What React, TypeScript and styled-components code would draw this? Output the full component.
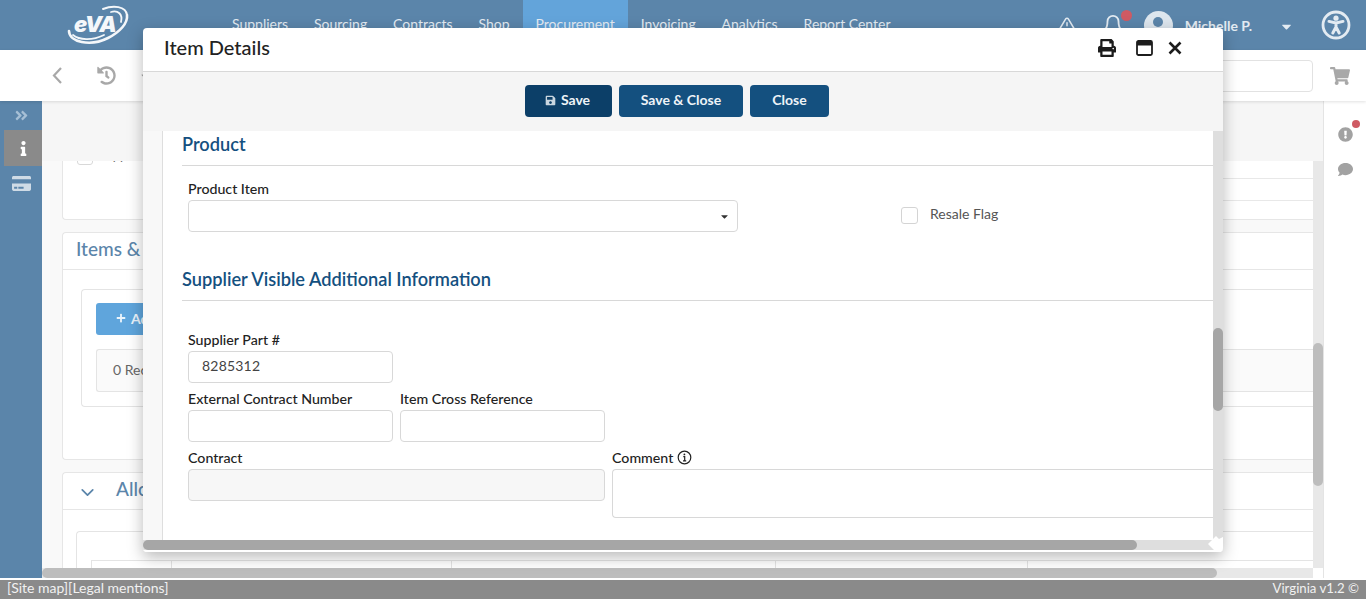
import * as React from 'react';
import styled, { createGlobalStyle } from 'styled-components';
import { FaPrint, FaHistory, FaShoppingCart, FaSave, FaInfo, FaCreditCard, FaAngleDoubleRight, FaCaretDown, FaExclamationCircle, FaComment, FaPlus } from 'react-icons/fa';
import { FiAlertTriangle, FiBell, FiChevronDown } from 'react-icons/fi';

const colors = {
  header: '#5b85aa',
  active: '#63a4da',
  navy: '#14507f',
  navyDark: '#0c3f68',
  line: '#d8d8d8',
  scrollTrack: '#dedede',
  scrollThumb: '#a6a6a6',
  pageThumb: '#bdbdbd',
  footer: '#8a8a8a',
};

const GlobalStyle = createGlobalStyle`
  html, body, #root {
    margin: 0;
    height: 100%;
  }
  body {
    font-family: Lato, "Open Sans", sans-serif;
    overflow: hidden;
  }
  * {
    box-sizing: border-box;
  }
`;

const Page = styled.div`
  position: relative;
  width: 1366px;
  height: 599px;
  display: flex;
  flex-direction: column;
  background: white;
  overflow: hidden;
`;

const Header = styled.header`
  height: 50px;
  flex: none;
  display: flex;
  background: ${colors.header};
  color: #e3ebf2;
`;

const LogoWrap = styled.div`
  width: 219px;
  padding: 4px 0 0 66px;
`;

const Nav = styled.nav`
  display: flex;
  height: 50px;
`;

const NavItem = styled.a<{ $active?: boolean }>`
  padding: 15px 12.95px 0;
  font-size: 14px;
  line-height: 18px;
  background: ${(p) => (p.$active ? colors.active : 'transparent')};
`;

const HeaderRight = styled.div`
  margin-left: auto;
  display: flex;
  align-items: center;
  padding-right: 15px;
`;

const Bell = styled.div`
  position: relative;
  display: flex;
  margin-left: 26px;
  font-size: 22px;

  &::after {
    content: '';
    position: absolute;
    top: -4px;
    right: -8px;
    width: 11px;
    height: 11px;
    border-radius: 50%;
    background: #cf5a63;
  }
`;

const Avatar = styled.div`
  width: 29px;
  height: 29px;
  margin-left: 20px;
  border-radius: 50%;
  background: #dde6ee;
  display: flex;
  justify-content: center;
  padding-top: 6px;

  &::before {
    content: '';
    width: 10px;
    height: 10px;
    border-radius: 50%;
    background: ${colors.header};
  }
`;

const UserName = styled.span`
  margin-left: 12px;
  font-size: 14px;
  font-weight: 700;
`;

const UserCaret = styled.span`
  display: flex;
  margin: 2px 0 0 27px;
  font-size: 15px;
`;

const Toolbar = styled.div`
  height: 51px;
  flex: none;
  display: flex;
  align-items: center;
  padding: 0 16px 0 52px;
  color: #a8a8a8;
  background: white;
  box-shadow: 0 1px 3px rgba(0, 0, 0, 0.12);
  z-index: 1;
`;

const ToolIcon = styled.span<{ $gap?: number; $size?: number }>`
  display: flex;
  margin-left: ${(p) => p.$gap ?? 0}px;
  font-size: ${(p) => p.$size ?? 18}px;
`;

const Search = styled.div`
  width: 320px;
  height: 32px;
  margin-left: auto;
  margin-right: 17px;
  border: 1px solid #e2e2e2;
  border-radius: 4px;
`;

const Body = styled.div`
  flex: 1;
  min-height: 0;
  display: flex;
`;

const Sidebar = styled.aside`
  width: 42px;
  flex: none;
  background: ${colors.header};
  color: #cfdbe6;
  display: flex;
  flex-direction: column;
`;

const SideItem = styled.div<{ $active?: boolean; $h: number; $tone?: string }>`
  height: ${(p) => p.$h}px;
  display: flex;
  align-items: center;
  justify-content: center;
  font-size: 15px;
  ${(p) => p.$tone && `color: ${p.$tone};`}
  ${(p) => p.$active && `
    margin-left: 4px;
    background: #8a8a8a;
    color: white;
  `}
`;

const SideCard = styled(SideItem)`
  font-size: 19px;
  padding-bottom: 2px;
`;

const Main = styled.main`
  flex: 1;
  min-width: 0;
  display: flex;
  flex-direction: column;
`;

const PageTitle = styled.div`
  height: 60px;
  flex: none;
  background: #f6f6f6;
`;

const ScrollPane = styled.div`
  flex: 1;
  min-height: 0;
  display: grid;
  grid-template-columns: 1fr 10px;
  grid-template-rows: 1fr 10px;
`;

const Viewport = styled.div`
  overflow: hidden;
  background: #f9f9f9;
  min-height: 0;
`;

const Card = styled.section<{ $h: number }>`
  height: ${(p) => p.$h}px;
  margin: 0 0 12px 20px;
  background: white;
  border: 1px solid #e6e6e6;
  border-right: 0;
  border-radius: 4px 0 0 4px;
  overflow: hidden;
`;

const ScrolledCard = styled(Card)`
  border-top: 0;
  border-radius: 0 0 0 4px;
`;

const TopRows = styled.div`
  margin-top: -13px;
  padding-left: 14px;
  color: #666;
  font-size: 13px;
  line-height: 14px;
`;

const TopRow = styled.div`
  display: flex;
  align-items: flex-start;
  height: 31px;
`;

const RowRule = styled.div`
  flex: 1;
  height: 100%;
  margin-left: 200px;
  border-bottom: 1px solid #e8e8e8;
`;

const SpacerRule = styled(RowRule)`
  height: 22px;
  margin-left: 300px;
`;

const SmallBox = styled.span`
  width: 16px;
  height: 16px;
  margin: 1px 11px 0 0;
  border: 1px solid #d8d8d8;
  border-radius: 3px;
`;

const CardHead = styled.div`
  height: 37px;
  display: flex;
  align-items: center;
  padding: 0 0 6px 13px;
  border-bottom: 1px solid #e6e6e6;
  color: #5b85aa;
  font-size: 19px;
  font-weight: 500;
`;

const ChevronBox = styled.span`
  display: flex;
  margin: 9px 18px 0 1px;
  font-size: 21px;
`;

const InnerBox = styled.div<{ $left: number; $top: number }>`
  margin: ${(p) => p.$top}px 0 0 ${(p) => p.$left}px;
  padding: 13px 0 0 14px;
  border: 1px solid #e4e4e4;
  border-right: 0;
  border-radius: 4px 0 0 4px;
`;

const AddButton = styled.div`
  width: 200px;
  height: 32px;
  display: flex;
  align-items: center;
  gap: 5px;
  padding: 0 0 2px 20px;
  background: #5fa5dc;
  border-radius: 3px;
  color: #e9f3fb;
  font-size: 14px;
  font-weight: 700;
`;

const RecordBox = styled.div`
  height: 43px;
  margin: 14px 0;
  padding: 11px 0 0 16px;
  background: #fafafa;
  border: 1px solid #e4e4e4;
  border-right: 0;
  border-radius: 3px 0 0 3px;
  color: #666;
  font-size: 14px;
`;

const TableHead = styled.div`
  display: grid;
  grid-template-columns: 80px 280px 324px 252px 1fr;
  height: 30px;
  margin-top: 15px;
  border-top: 1px solid #e4e4e4;
`;

const TableCell = styled.div`
  border-left: 1px solid #e4e4e4;
`;

const RightRail = styled.aside`
  width: 43px;
  flex: none;
  display: flex;
  flex-direction: column;
  align-items: center;
  padding-top: 26px;
  gap: 20px;
  background: white;
  border-left: 1px solid #e4e4e4;
  color: #a2a2a2;
`;

const AlertIcon = styled.div`
  position: relative;
  display: flex;
  font-size: 15px;

  &::after {
    content: '';
    position: absolute;
    top: -7px;
    right: -7px;
    width: 8px;
    height: 8px;
    border-radius: 50%;
    background: #cf5a63;
  }
`;

const ChatIcon = styled.div`
  display: flex;
  font-size: 15px;
`;

const Track = styled.div<{ $tone?: string }>`
  background: ${(p) => p.$tone ?? '#e8e8e8'};
  display: flex;
  min-width: 0;
  min-height: 0;
`;

const VTrack = styled(Track)`
  flex-direction: column;
`;

const Thumb = styled.div<{ $tone: string; $before?: number; $size: number; $vertical?: boolean }>`
  background: ${(p) => p.$tone};
  border-radius: 5px;
  flex: none;
  ${(p) => p.$vertical
    ? `height: ${p.$size}px; width: 100%; margin-top: ${p.$before ?? 0}px;`
    : `width: ${p.$size}px; height: 100%; margin-left: ${p.$before ?? 0}px;`}
`;

const Footer = styled.footer`
  height: 19px;
  flex: none;
  margin-top: 2px;
  display: flex;
  justify-content: space-between;
  align-items: center;
  padding: 0 7px 4px;
  background: ${colors.footer};
  color: #f1f1f1;
  font-size: 14px;
`;

const Version = styled.span`
  font-size: 13.2px;
`;

const Modal = styled.div`
  position: absolute;
  top: 28px;
  left: 143px;
  width: 1080px;
  height: 524px;
  display: flex;
  flex-direction: column;
  background: white;
  border-radius: 4px;
  box-shadow: 0 5px 16px rgba(0, 0, 0, 0.28);
  z-index: 5;
  overflow: hidden;
`;

const ModalHeader = styled.div`
  height: 44px;
  flex: none;
  display: flex;
  align-items: center;
  padding: 0 41px 6px 21px;
  border-bottom: 1px solid ${colors.line};
`;

const ModalTitle = styled.h1`
  margin: 0;
  font-size: 20px;
  font-weight: 500;
  color: #222;
`;

const WindowIcons = styled.div`
  margin: 3px 0 0 auto;
  display: flex;
  align-items: center;
  color: #1c1c1c;
`;

const WindowIcon = styled.span<{ $gap?: number; $size?: number }>`
  display: flex;
  margin-left: ${(p) => p.$gap ?? 0}px;
  font-size: ${(p) => p.$size ?? 16}px;
`;

const ActionBar = styled.div`
  height: 59px;
  flex: none;
  display: flex;
  gap: 7px;
  padding: 13px 0 0 382px;
  background: #f5f5f5;
`;

const ActionButton = styled.button<{ $dark?: boolean; $w: number }>`
  width: ${(p) => p.$w}px;
  height: 32px;
  display: flex;
  align-items: center;
  justify-content: center;
  gap: 5px;
  padding: 0 ${(p) => (p.$dark ? 2 : 0)}px 4px 0;
  border: 0;
  border-radius: 4px;
  background: ${(p) => (p.$dark ? colors.navyDark : colors.navy)};
  color: #eef3f7;
  font-family: inherit;
  font-size: 14px;
  font-weight: 700;
`;

const ButtonGlyph = styled.span`
  display: flex;
  margin-top: 2px;
  font-size: 11px;
  color: #c9d6e0;
`;

const ModalBody = styled.div`
  flex: 1;
  min-height: 0;
  display: grid;
  grid-template-columns: 1fr 10px;
  grid-template-rows: 1fr 10px 2px;
`;

const ScrollArea = styled.div`
  overflow: hidden;
  padding-left: 19px;
  background: #f8f8f8;
`;

const FormCard = styled.div`
  height: 100%;
  padding-left: 19px;
  background: white;
  border-left: 1px solid #dedede;
`;

const SectionTitle = styled.h2`
  height: 35px;
  margin: 0;
  padding-top: 1px;
  font-size: 18.2px;
  line-height: 24px;
  font-weight: 600;
  color: ${colors.navy};
  border-bottom: 1px solid ${colors.line};
`;

const SupplierTitle = styled(SectionTitle)`
  height: 34px;
  margin-top: 35px;
  padding-top: 0;
`;

const ProductRow = styled.div`
  display: flex;
  align-items: flex-end;
  padding: 7px 0 0 6px;
`;

const Field = styled.div<{ $column?: string }>`
  min-width: 0;
  ${(p) => p.$column && `grid-column: ${p.$column};`}
`;

const ProductField = styled(Field)`
  width: 550px;
`;

const Label = styled.label`
  height: 27px;
  display: flex;
  align-items: center;
  gap: 4px;
  padding-top: 3px;
  font-size: 14.2px;
  font-weight: 500;
  color: #222;
`;

const Input = styled.div<{ $disabled?: boolean; $h?: number; $open?: boolean }>`
  height: ${(p) => p.$h ?? 32}px;
  display: flex;
  align-items: center;
  justify-content: space-between;
  padding: 0 7px 4px 13px;
  background: ${(p) => (p.$disabled ? '#f7f7f7' : 'white')};
  border: 1px solid ${colors.line};
  border-radius: 4px;
  ${(p) => p.$open && 'border-right: 0; border-radius: 4px 0 0 4px;'}
  font-size: 14px;
  letter-spacing: 0.2px;
  color: #444;
`;

const SelectCaret = styled.span`
  display: flex;
  margin: 4px 0 0 auto;
  font-size: 11px;
  color: #333;
`;

const Resale = styled.div`
  display: flex;
  align-items: center;
  gap: 12px;
  margin: 0 0 8px 163px;
  font-size: 14px;
  color: #555;
`;

const Checkbox = styled.span`
  width: 17px;
  height: 17px;
  margin-top: 4px;
  background: white;
  border: 1px solid #d4d4d4;
  border-radius: 3px;
`;

const SupplierGrid = styled.div`
  display: grid;
  grid-template-columns: 205px 205px 1fr;
  column-gap: 7px;
  padding: 23px 0 0 6px;
`;

const Corner = styled.div`
  position: relative;
  background: ${colors.scrollTrack};
`;

const ResizeGrip = styled.svg`
  position: absolute;
  right: 0;
  bottom: 0;
`;

const Filler = styled.div`
  grid-column: 1 / 3;
  background: white;
`;

function AccessibilityIcon() {
  return (
    <svg width="30" height="30" viewBox="0 0 30 30" fill="none" stroke="currentColor">
      <circle cx="15" cy="15" r="13" strokeWidth="2.8" />
      <circle cx="15" cy="8.2" r="2.6" fill="currentColor" stroke="none" />
      <path d="M8 11.4 L15 13 L22 11.4 M15 13 V17.2 M15 17 L11.8 23 M15 17 L18.2 23" strokeWidth="3" strokeLinecap="round" strokeLinejoin="round" />
    </svg>
  );
}

function EvaLogo() {
  return (
    <svg width="66" height="44" viewBox="0 0 66 44" fill="none" stroke="#f4f7fa" strokeLinecap="round">
      <path d="M3 27 C3 38 24 43 42 34 C54 28 62 19 61 11" strokeWidth="2.6" />
      <path d="M7 31 C13 36 26 37 38 31" strokeWidth="1.8" />
      <path d="M37 5 C47 1 60 2 61 11" strokeWidth="2" />
      <path d="M45 8 C52 6 57 10 55 18" strokeWidth="1.8" />
      <text x="8" y="28" fontFamily="Inter, sans-serif" fontSize="22" fontWeight="900" fontStyle="italic" fill="#f4f7fa" stroke="none" letterSpacing="-1">eVA</text>
    </svg>
  );
}

export default function App() {
  return (
    <Page>
      <GlobalStyle />
      <Header>
        <LogoWrap><EvaLogo /></LogoWrap>
        <Nav>
          <NavItem>Suppliers</NavItem>
          <NavItem>Sourcing</NavItem>
          <NavItem>Contracts</NavItem>
          <NavItem>Shop</NavItem>
          <NavItem $active>Procurement</NavItem>
          <NavItem>Invoicing</NavItem>
          <NavItem>Analytics</NavItem>
          <NavItem>Report Center</NavItem>
        </Nav>
        <HeaderRight>
          <ToolIcon $size={18}><FiAlertTriangle /></ToolIcon>
          <Bell><FiBell /></Bell>
          <Avatar />
          <UserName>Michelle P.</UserName>
          <UserCaret><FaCaretDown /></UserCaret>
          <ToolIcon $gap={27}><AccessibilityIcon /></ToolIcon>
        </HeaderRight>
      </Header>

      <Toolbar>
        <ToolIcon>
          <svg width="10" height="17" viewBox="0 0 10 17" fill="none" stroke="currentColor" strokeWidth="2.2">
            <path d="M9 1 L2 8.5 L9 16" />
          </svg>
        </ToolIcon>
        <ToolIcon $gap={35} $size={19}><FaHistory /></ToolIcon>
        <ToolIcon $gap={23} $size={12}><FaCaretDown /></ToolIcon>
        <Search />
        <ToolIcon $size={20}><FaShoppingCart /></ToolIcon>
      </Toolbar>

      <Body>
        <Sidebar>
          <SideItem $h={29} $tone="#a6bfd5"><FaAngleDoubleRight /></SideItem>
          <SideItem $h={36} $active><FaInfo /></SideItem>
          <SideCard $h={36}><FaCreditCard /></SideCard>
        </Sidebar>
        <Main>
          <PageTitle />
          <ScrollPane>
            <Viewport>
              <ScrolledCard $h={59}>
                <TopRows>
                  <TopRow>
                    <SmallBox />
                    Approved
                    <RowRule />
                  </TopRow>
                  <TopRow>
                    <SpacerRule />
                  </TopRow>
                </TopRows>
              </ScrolledCard>
              <Card $h={228}>
                <CardHead>Items &amp; Services</CardHead>
                <InnerBox $left={18} $top={19}>
                  <AddButton><FaPlus size={10} />Add</AddButton>
                  <RecordBox>0 Records</RecordBox>
                </InnerBox>
              </Card>
              <Card $h={120}>
                <CardHead>
                  <ChevronBox><FiChevronDown /></ChevronBox>
                  Allocations
                </CardHead>
                <InnerBox $left={13} $top={21}>
                  <TableHead>
                    <TableCell /><TableCell /><TableCell /><TableCell /><TableCell />
                  </TableHead>
                </InnerBox>
              </Card>
            </Viewport>
            <VTrack>
              <Thumb $vertical $tone={colors.pageThumb} $before={182} $size={143} />
            </VTrack>
            <Track>
              <Thumb $tone={colors.pageThumb} $size={1175} />
            </Track>
          </ScrollPane>
        </Main>
        <RightRail>
          <AlertIcon><FaExclamationCircle /></AlertIcon>
          <ChatIcon><FaComment /></ChatIcon>
        </RightRail>
      </Body>
      <Footer>
        <span>[Site map][Legal mentions]</span>
        <Version>Virginia v1.2 ©</Version>
      </Footer>

      <Modal>
        <ModalHeader>
          <ModalTitle>Item Details</ModalTitle>
          <WindowIcons>
            <WindowIcon $size={18}><FaPrint /></WindowIcon>
            <WindowIcon $gap={20}>
              <svg width="17" height="16" viewBox="0 0 17 16">
                <rect x="1" y="1" width="15" height="14" rx="1.5" fill="none" stroke="currentColor" strokeWidth="1.8" />
                <rect x="1" y="1" width="15" height="4.5" fill="currentColor" />
              </svg>
            </WindowIcon>
            <WindowIcon $gap={15}>
              <svg width="14" height="14" viewBox="0 0 14 14" fill="none" stroke="currentColor" strokeWidth="2.6">
                <path d="M1.5 1.5 L12.5 12.5 M12.5 1.5 L1.5 12.5" />
              </svg>
            </WindowIcon>
          </WindowIcons>
        </ModalHeader>
        <ActionBar>
          <ActionButton $dark $w={87}><ButtonGlyph><FaSave /></ButtonGlyph>Save</ActionButton>
          <ActionButton $w={124}>Save &amp; Close</ActionButton>
          <ActionButton $w={79}>Close</ActionButton>
        </ActionBar>
        <ModalBody>
          <ScrollArea>
            <FormCard>
              <SectionTitle>Product</SectionTitle>
              <ProductRow>
                <ProductField>
                  <Label>Product Item</Label>
                  <Input><SelectCaret><FaCaretDown /></SelectCaret></Input>
                </ProductField>
                <Resale><Checkbox />Resale Flag</Resale>
              </ProductRow>
              <SupplierTitle>Supplier Visible Additional Information</SupplierTitle>
              <SupplierGrid>
                <Field $column="1">
                  <Label>Supplier Part #</Label>
                  <Input>8285312</Input>
                </Field>
                <Field $column="1">
                  <Label>External Contract Number</Label>
                  <Input />
                </Field>
                <Field $column="2">
                  <Label>Item Cross Reference</Label>
                  <Input />
                </Field>
                <Field $column="1 / span 2">
                  <Label>Contract</Label>
                  <Input $disabled />
                </Field>
                <Field $column="3">
                  <Label>Comment
                    <svg width="15" height="15" viewBox="0 0 15 15" fill="none" stroke="#222">
                      <circle cx="7.5" cy="7.5" r="6.3" strokeWidth="1.2" />
                      <path d="M6.3 6.6 H7.7 V10.6 M6 10.8 H9.2" strokeWidth="1.2" />
                      <circle cx="7.4" cy="4.4" r="0.9" fill="#222" stroke="none" />
                    </svg>
                  </Label>
                  <Input $h={49} $open />
                </Field>
              </SupplierGrid>
            </FormCard>
          </ScrollArea>
          <VTrack $tone={colors.scrollTrack}>
            <Thumb $vertical $tone={colors.scrollThumb} $before={197} $size={83} />
          </VTrack>
          <Track $tone={colors.scrollTrack}>
            <Thumb $tone={colors.scrollThumb} $size={994} />
          </Track>
          <Corner>
            <ResizeGrip width="15" height="14" viewBox="0 0 15 14">
              <path d="M0 8 L8 0 L11 3 L15 1 V14 H6 Z" fill="white" />
            </ResizeGrip>
          </Corner>
          <Filler />
        </ModalBody>
      </Modal>
    </Page>
  );
}
